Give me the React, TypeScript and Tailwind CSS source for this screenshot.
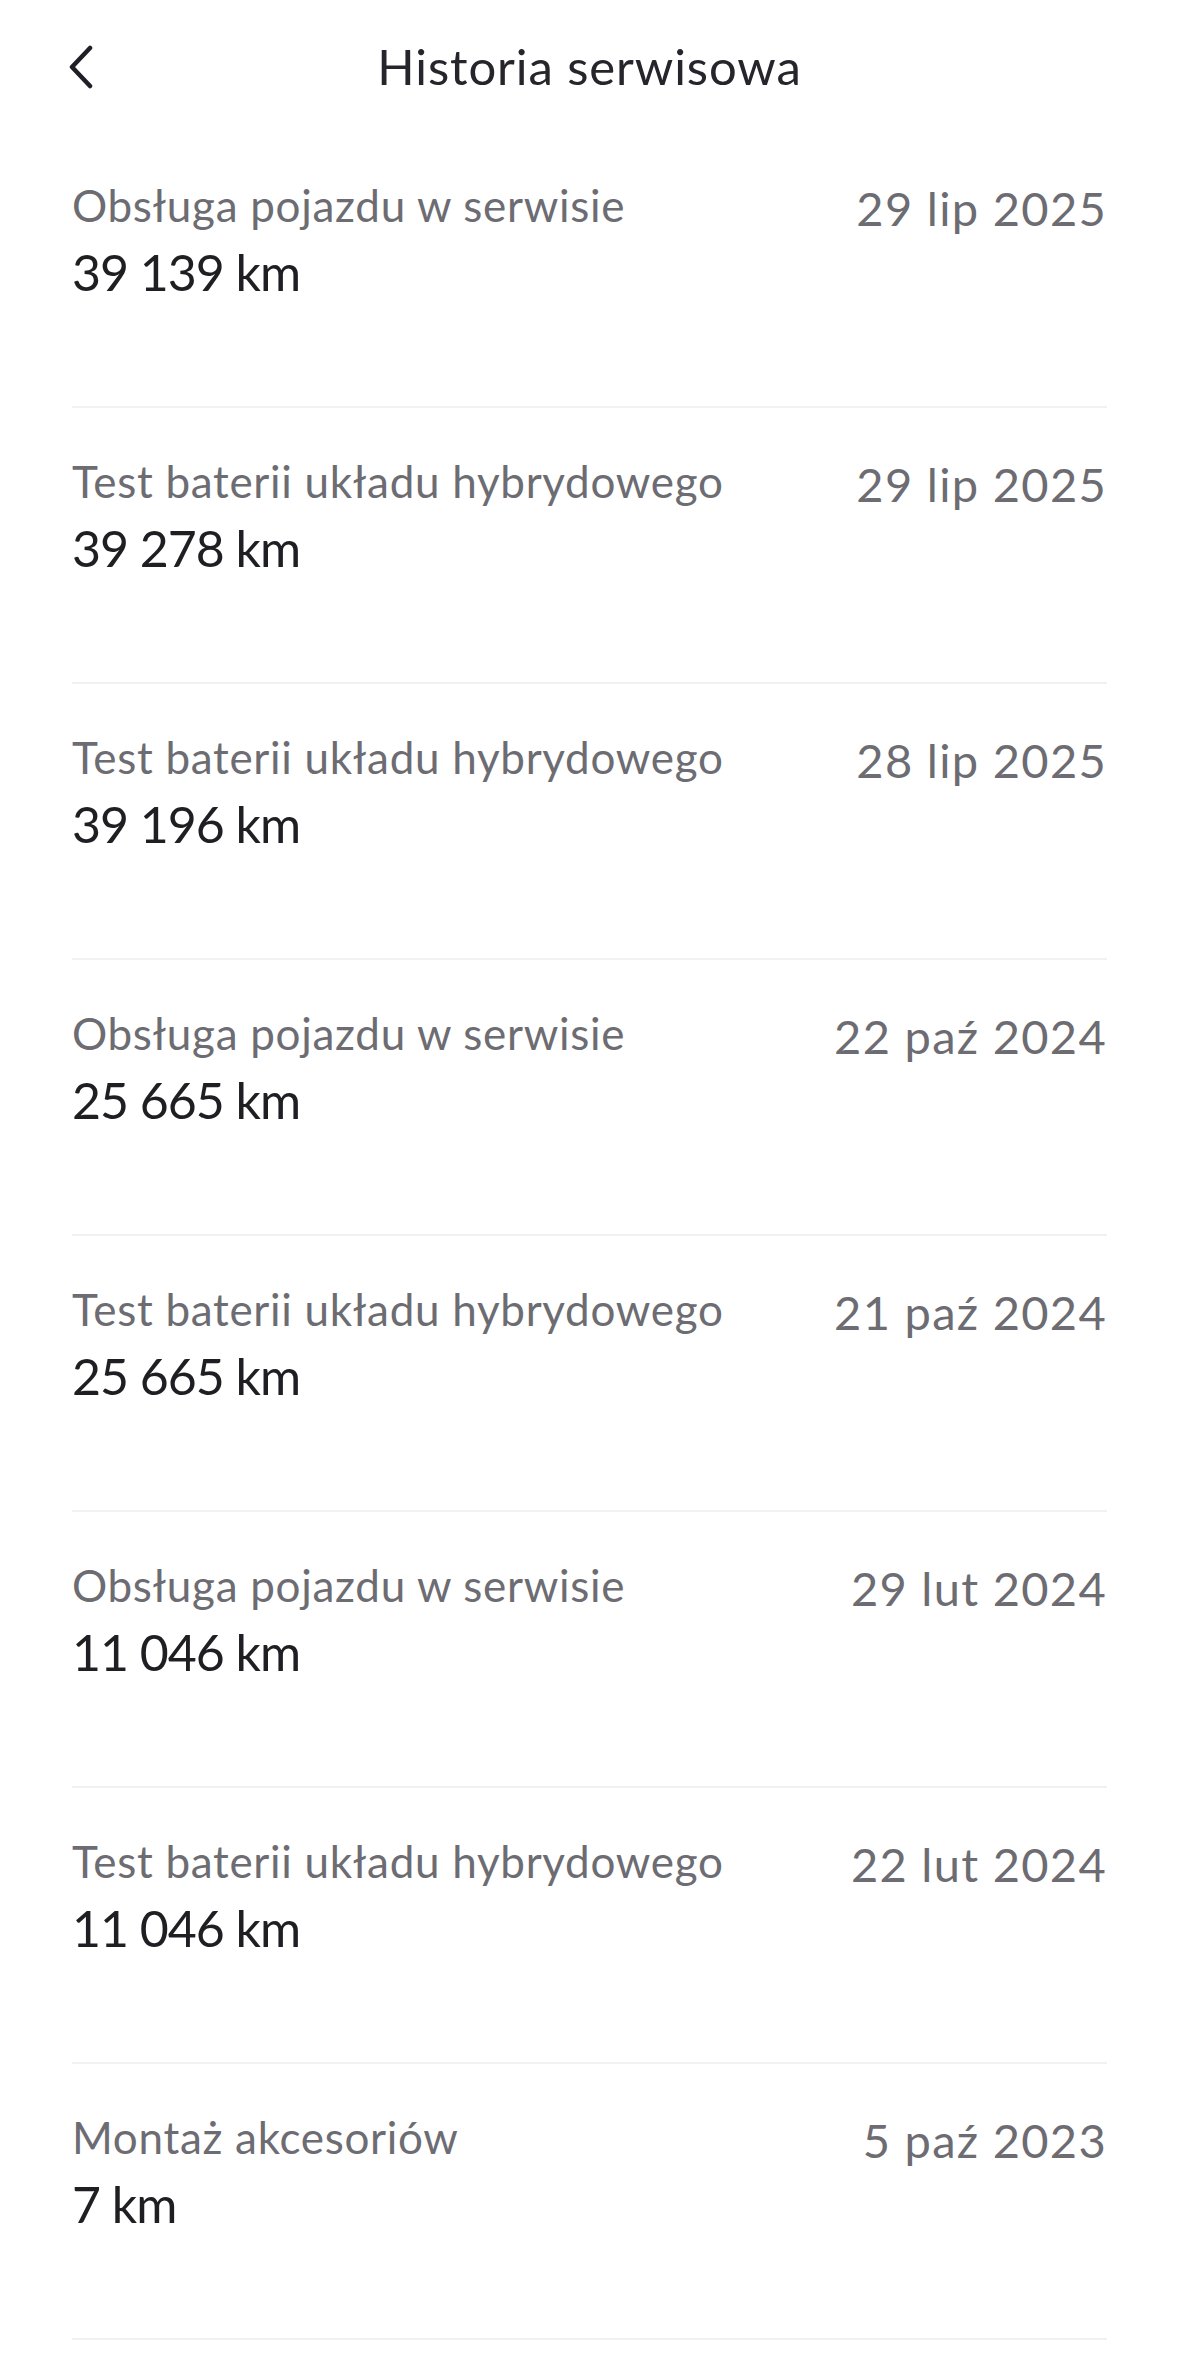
const entries = [
  { title: "Obsługa pojazdu w serwisie", km: "39 139 km", date: "29 lip 2025" },
  { title: "Test baterii układu hybrydowego", km: "39 278 km", date: "29 lip 2025" },
  { title: "Test baterii układu hybrydowego", km: "39 196 km", date: "28 lip 2025" },
  { title: "Obsługa pojazdu w serwisie", km: "25 665 km", date: "22 paź 2024" },
  { title: "Test baterii układu hybrydowego", km: "25 665 km", date: "21 paź 2024" },
  { title: "Obsługa pojazdu w serwisie", km: "11 046 km", date: "29 lut 2024" },
  { title: "Test baterii układu hybrydowego", km: "11 046 km", date: "22 lut 2024" },
  { title: "Montaż akcesoriów", km: "7 km", date: "5 paź 2023" },
];

const BackIcon = () => (
  <svg width="26" height="44" viewBox="0 0 26 44" fill="none">
    <path
      d="M22 3 L4 22 L22 41"
      stroke="#1f2026"
      strokeWidth="4.5"
      strokeLinecap="round"
      strokeLinejoin="round"
    />
  </svg>
);

const Header = () => {
  return (
    <header className="grid h-[132px] grid-cols-[1fr_auto_1fr] items-center">
      <div className="pl-[68px] pt-[1px]">
        <BackIcon />
      </div>
      <h1 className="text-[49px] leading-[59px] tracking-[0.9px] text-[#25252b]">Historia serwisowa</h1>
      <div />
    </header>
  );
};

type Entry = (typeof entries)[number];

const ServiceRow = ({ entry }: { entry: Entry }) => {
  return (
    <li className="border-b-2 border-[#f1f1f3] pb-[104px] pt-[46px]">
      <div className="flex items-start justify-between">
        <div>
          <div className="text-[44px] leading-[54px] tracking-[0.7px] text-[#6c6c72]">{entry.title}</div>
          <div className="mt-[10px] text-[50px] leading-[60px] tracking-[-1px] text-[#1e1e23]">{entry.km}</div>
        </div>
        <div className="mt-[3px] text-[47px] leading-[54px] tracking-[1.3px] text-[#6c6c72]">{entry.date}</div>
      </div>
    </li>
  );
};

export default function App() {
  return (
    <div className="min-h-screen bg-white font-['Lato',sans-serif]">
      <Header />
      <ul className="mx-[72px]">
        {entries.map((e, i) => (
          <ServiceRow key={i} entry={e} />
        ))}
      </ul>
    </div>
  );
}
